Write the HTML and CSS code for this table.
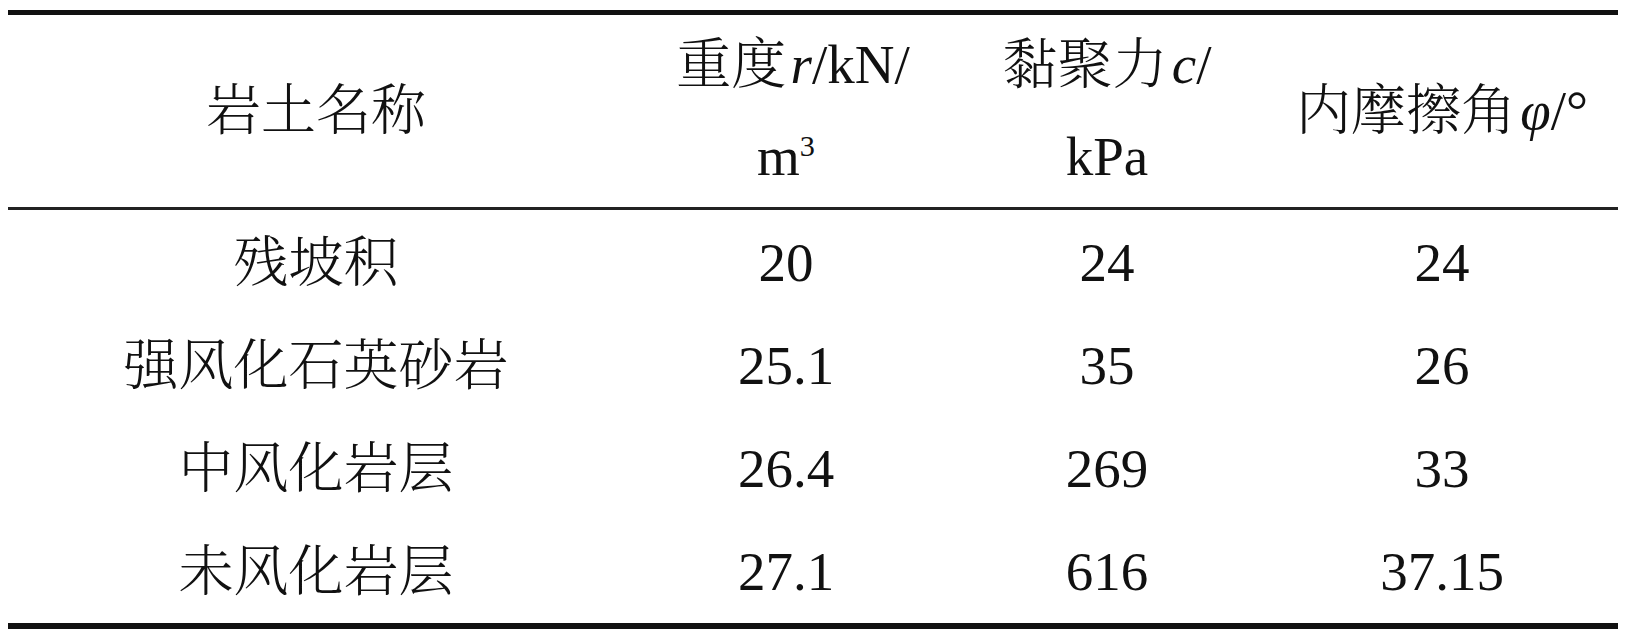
FILE: index.html
```html
<!DOCTYPE html>
<html>
	<head>
		<meta charset="utf-8">
		<title>岩土参数</title>
		<link rel="stylesheet" href="styles.css">
	</head>
	<body>
		<table class="soil_table">
			<colgroup>
				<col class="col_name">
				<col class="col_weight">
				<col class="col_cohesion">
				<col class="col_angle">
			</colgroup>
			<thead>
				<tr>
					<th>岩土名称</th>
					<th><span class="shift">重度<i class="var">r</i>/kN/</span><br>m<sup>3</sup></th>
					<th>黏聚力<i class="var">c</i>/<br>kPa</th>
					<th>内摩擦角<i class="var">φ</i>/°</th>
				</tr>
			</thead>
			<tbody>
				<tr>
					<td>残坡积</td>
					<td>20</td>
					<td>24</td>
					<td>24</td>
				</tr>
				<tr>
					<td>强风化石英砂岩</td>
					<td>25.1</td>
					<td>35</td>
					<td>26</td>
				</tr>
				<tr>
					<td>中风化岩层</td>
					<td>26.4</td>
					<td>269</td>
					<td>33</td>
				</tr>
				<tr>
					<td>未风化岩层</td>
					<td>27.1</td>
					<td>616</td>
					<td>37.15</td>
				</tr>
			</tbody>
		</table>
	</body>
</html>
```

FILE: styles.css
```css
body {
	margin : 0;
	background-color : #fff;
	color : #111;
	font-family : "Liberation Serif", "Noto Serif CJK SC", "Noto Sans CJK SC", serif;
	font-size : 55px;
}

.soil_table {
	margin : 10px 0 0 8px;
	width : 1610px;
	table-layout : fixed;
	border-collapse : separate;
	border-spacing : 0;
	border-top : 5px solid #111;
	border-bottom : 6px solid #111;
}
	.col_name { width : 616px; }
	.col_weight { width : 324px; }
	.col_cohesion { width : 318px; }
	.col_angle { width : 352px; }

.soil_table th,
.soil_table td {
	padding : 0;
	text-align : center;
	vertical-align : middle;
	font-weight : 300;
}
.soil_table th {
	height : 192px;
	line-height : 92px;
	border-bottom : 3px solid #222;
}
.soil_table td {
	height : 103px;
	line-height : 103px;
}
.soil_table tbody tr:first-child td {
	padding-top : 1px;
	height : 102px;
}
.soil_table tbody tr:last-child td {
	height : 102px;
}

.var {
	font-style : italic;
	margin-left : 0.08em;
}
.shift {
	position : relative;
	left : 7px;
}
sup {
	font-size : 0.55em;
	line-height : 0;
	vertical-align : 0.62em;
}
```
